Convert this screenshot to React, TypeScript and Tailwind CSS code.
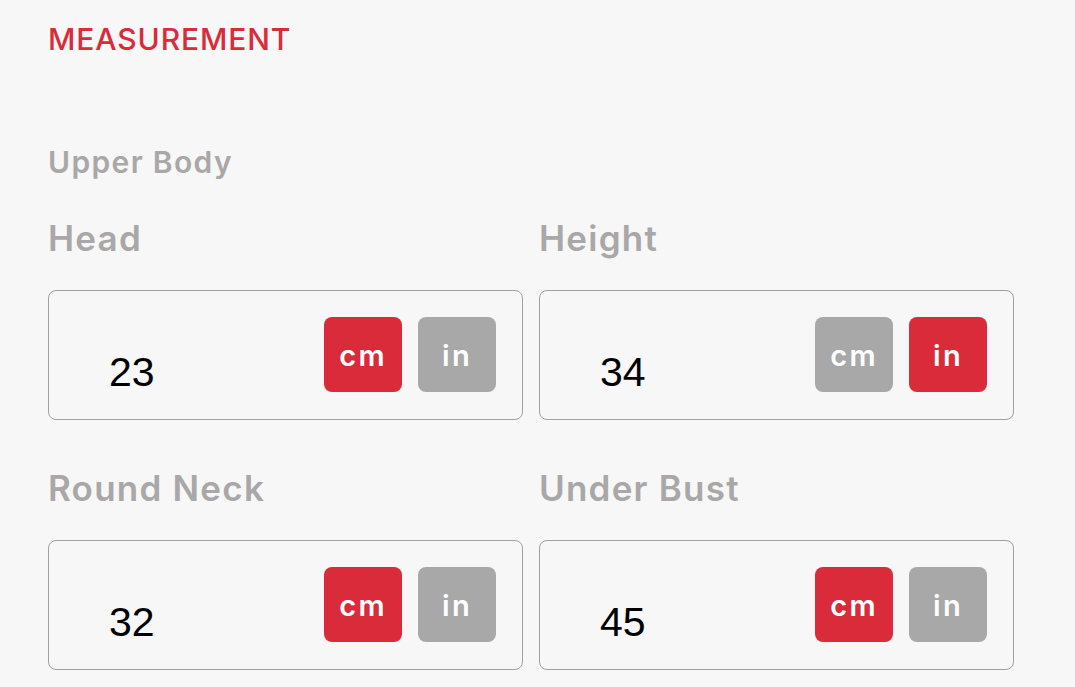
import { useState } from 'react'

type Unit = 'cm' | 'in'

interface Field {
  label: string
  value: string
  unit: Unit
}

const fields: Field[] = [
  { label: 'Head', value: '23', unit: 'cm' },
  { label: 'Height', value: '34', unit: 'in' },
  { label: 'Round Neck', value: '32', unit: 'cm' },
  { label: 'Under Bust', value: '45', unit: 'cm' },
]

function UnitButton({ active, label, onClick }: { active: boolean; label: string; onClick: () => void }) {
  return (
    <button
      onClick={onClick}
      className={`flex h-[75px] w-[78px] items-center justify-center rounded-[8px] pt-[4px] text-[29px] font-semibold tracking-[0.08em] text-white ${
        active ? 'bg-[#d92b3a]' : 'bg-[#a8a8a8]'
      }`}
    >
      {label}
    </button>
  )
}

function MeasureField({ field }: { field: Field }) {
  const [unit, setUnit] = useState<Unit>(field.unit)
  return (
    <div>
      <div className="h-[54px] pt-[3px] text-[35px] font-semibold leading-none tracking-[0.035em] text-[#a9a7a7]">
        {field.label}
      </div>
      <div className="mt-[18px] flex h-[130px] items-center rounded-[8px] border border-[#a0a0a0] pl-[60px] pr-[26px]">
        <span className="flex-1 pt-[34px] font-['Liberation_Sans',Arial,sans-serif] text-[41px] leading-none text-black">
          {field.value}
        </span>
        <div className="flex gap-4 pb-[2px]">
          <UnitButton active={unit === 'cm'} label="cm" onClick={() => setUnit('cm')} />
          <UnitButton active={unit === 'in'} label="in" onClick={() => setUnit('in')} />
        </div>
      </div>
    </div>
  )
}

export default function App() {
  return (
    <div className="min-h-[687px] bg-[#f7f7f7] pl-12 pt-[24px] font-['Inter','Noto_Sans',sans-serif]">
      <h1 className="text-[30px] font-medium leading-none tracking-[0.03em] text-[#d92b3a]">MEASUREMENT</h1>
      <h2 className="mt-[93px] text-[30px] font-semibold leading-none tracking-[0.045em] text-[#aaa7a7]">Upper Body</h2>
      <div className="mt-[41px] grid w-[966px] grid-cols-2 gap-x-4 gap-y-[48px]">
        {fields.map((f) => (
          <MeasureField key={f.label} field={f} />
        ))}
      </div>
    </div>
  )
}
